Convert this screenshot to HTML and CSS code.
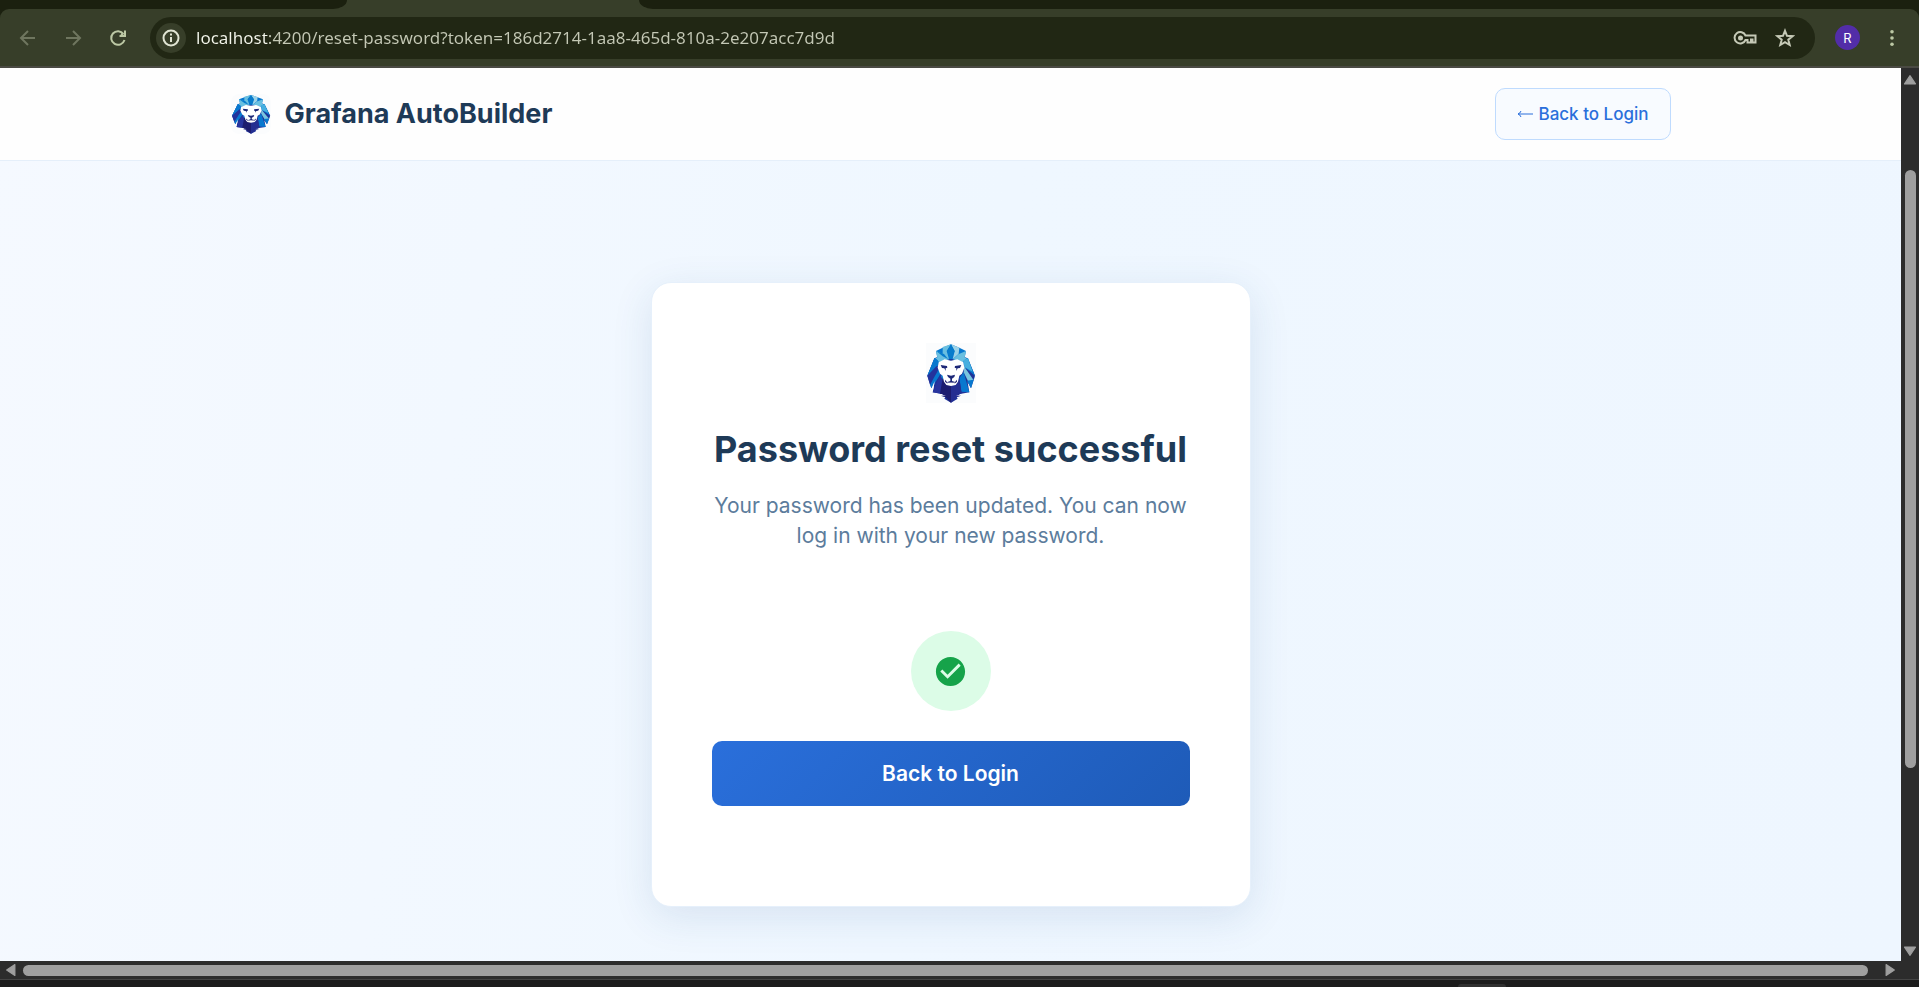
FILE: index.html
```html
<!DOCTYPE html>
<html lang="en">
<head>
<meta charset="utf-8">
<meta name="viewport" content="width=device-width, initial-scale=1">
<title>Grafana AutoBuilder</title>
<link rel="stylesheet" href="styles.css">
</head>
<body>
<svg class="sprite" aria-hidden="true">
  <symbol id="lion" viewBox="30 24 150 180" preserveAspectRatio="none">
    <path fill="#fbfcfd" d="M30 24h150v180H30z"/>
    <path fill="#1f3399" d="M55 70 34 122 46 160 56 142 50 172 82 178 75 182 88 186 85 191 105 203 125 191 122 186 135 182 128 178 160 172 155 142 165 160 177 122 155 70 105 50z"/>
    <path fill="#0878cf" d="M105 28 127 37 150 48 146 68 156 70 177 122 145 96 139 78 105 72 71 78 66 92 34 122 55 70 64 68 60 48 83 37z"/>
    <path fill="#69bfe0" d="M60 48 83 58 99 73 70 82 58 70 64 67zM80 36 105 28 92 48 99 72 80 56zM150 48 127 58 111 73 140 82 152 70 146 67z"/>
    <path fill="#9cd3e8" d="M105 28 130 38 128 56 110 73 116 49z"/>
    <path fill="#087ccc" d="M105 28 116 48 105 74 93 48zM62 49 84 57 96 72 80 64z"/>
    <path fill="#46afdf" d="M142 75 156 70 170 110 145 96z"/>
    <path fill="#79c5df" d="M144 94 172 134 163 152 143 112z"/>
    <path fill="#0878cf" d="M34 122 56 70 66 76 61 94zM67 96 76 114 46 160 42 148zM143 112 160 172 136 170 130 130zM172 134 177 122 165 160 153 137z"/>
    <path fill="#23339c" d="M34 122 62 93 69 101 42 149z"/>
    <path fill="#1685d1" d="M78 116 87 130 56 164z"/>
    <path fill="#28349e" d="M72 119 56 158 50 172 76 176 82 137z"/>
    <path fill="#1d1c6f" d="M80 130 72 176 82 178 76 183 88 186 105 203V148z"/>
    <path fill="#252e91" d="M130 130 137 175 128 178 135 182 123 186 105 203V148z"/>
    <path fill="#fff" d="M68 82 86 73 105 77 124 73 142 82 145 98 138 116 130 122 126 140 119 150 105 153 91 150 84 140 80 122 72 116 65 98z"/>
    <path fill="#fff" d="m46 162 10-24-6 34zM73 180l17 2-12 2zM137 180l-17 2 12 2z"/>
    <path fill="#1c2777" d="m74 90 19 3 1 5-5 2v8l-4-8-7-1zM136 90l-19 3-1 5 5 2v8l4-8 7-1zM93 119l12 3 12-3-2 7-7 5v7l12 4-14 1-14-1 11-4v-7l-7-5z"/>
    <path fill="#1d1c6f" d="M88 134 94 143 105 140 116 143 122 134 123 140 115 146H95L87 140z"/>
    <path fill="#fff" d="M93 144q12-3 24 0l-3 5H96z"/>
  </symbol>
</svg>

<header class="browser">
  <div class="tabstrip"><span class="tabs-before"></span><span class="tab-active"></span><span class="tabs-after"></span></div>
  <div class="toolbar">
    <nav class="nav-buttons" aria-label="Browser navigation">
      <button class="tool dim" aria-label="Back"><svg viewBox="0 0 20 20"><path d="M17 10H4M10 3l-7 7 7 7"/></svg></button>
      <button class="tool dim" aria-label="Forward"><svg viewBox="0 0 20 20"><path d="M3 10h13M10 3l7 7-7 7"/></svg></button>
      <button class="tool" aria-label="Reload"><svg viewBox="0 0 20 20"><path d="M16.500 12A6.800 6.800 0 1 1 15.500 6M11.500 8h5.500V2.500M13 6l3 2"/></svg></button>
    </nav>
    <div class="omnibox">
      <button class="site-info" aria-label="Site information"><svg viewBox="0 0 20 20"><circle cx="10" cy="10" r="7.500"/><path d="M10 9v5M10 5.500v2"/></svg></button>
      <input class="url" type="text" aria-label="Address" value="localhost:4200/reset-password?token=186d2714-1aa8-465d-810a-2e207acc7d9d">
      <button class="omni-icon key" aria-label="Passwords"><svg viewBox="0 0 24 16"><path d="M12.500 5.500h10v7h-3v-3h-1.500v3h-3.500v-2.500h-2A5.700 5.700 0 1 1 12.500 5.500z"/><circle class="solid" cx="7.500" cy="8" r="2.500"/></svg></button>
      <button class="omni-icon" aria-label="Bookmark"><svg viewBox="0 0 20 20"><path d="m10 2.800 2 5 5.600.4-4.300 3.500 1.400 5.300L10 14.200 5.300 17l1.400-5.300-4.300-3.500L8 7.800z"/></svg></button>
    </div>
    <button class="avatar" aria-label="Profile">R</button>
    <button class="menu" aria-label="Menu"><svg viewBox="0 0 4 20"><circle cx="2" cy="3" r="2"/><circle cx="2" cy="10" r="2"/><circle cx="2" cy="17" r="2"/></svg></button>
  </div>
</header>

<div class="viewport">
  <div class="page">
    <header class="site-header">
      <div class="site-inner">
        <div class="brand"><svg class="brand-logo" role="img" aria-label="Lion logo"><use href="#lion"/></svg><span>Grafana AutoBuilder</span></div>
        <a class="back-link" href="#login"><svg viewBox="0 0 16 10" aria-hidden="true"><path d="M16 5H1M4 2Q3 4.500 1 5q2 .5 3 3"/></svg>Back to Login</a>
      </div>
    </header>
    <main class="content">
      <section class="card">
        <svg class="card-logo" role="img" aria-label="Lion logo"><use href="#lion"/></svg>
        <h1>Password reset successful</h1>
        <p>Your password has been updated. You can now log in with your new password.</p>
        <div class="success"><svg viewBox="0 0 24 24" aria-hidden="true"><path d="M12 2C6.480 2 2 6.480 2 12s4.480 10 10 10 10-4.480 10-10S17.520 2 12 2zm-2 15-5-5 1.410-1.410L10 14.170l7.590-7.590L19 8l-9 9z"/></svg></div>
        <button class="primary">Back to Login</button>
      </section>
    </main>
  </div>
  <div class="scroll-y">
    <svg viewBox="0 0 12 10"><path d="M6 1.500 11 9H1z"/></svg>
    <div class="track-y"><span class="thumb-y"></span></div>
    <svg viewBox="0 0 12 10"><path d="M6 8.500 11 1H1z"/></svg>
  </div>
</div>
<div class="scroll-x">
  <svg viewBox="0 0 10 12"><path d="M1.500 6 9 1v10z"/></svg>
  <span class="thumb-x"></span>
  <svg viewBox="0 0 10 12"><path d="M8.500 6 1 1v10z"/></svg>
</div>
<footer class="taskbar"><span class="task-hint"></span></footer>
</body>
</html>
```

FILE: styles.css
```css
* { box-sizing: border-box; }

body {
  margin: 0;
  height: 100vh;
  display: flex;
  flex-direction: column;
  overflow: hidden;
  font-family: Inter, "Open Sans", sans-serif;
  background: #1c1c1c;
}

button {
  padding: 0;
  border: 0;
  background: none;
  font-family: inherit;
}

svg { display: block; }

.sprite {
  position: absolute;
  width: 0;
  height: 0;
}

/* Browser frame */
.browser {
  flex: none;
  background: #1b200f;
  border-bottom: 2px solid #4a4a43;
}

.tabstrip {
  display: flex;
  height: 9px;
  background: linear-gradient(#373e29, #373e29) 320px 0 / 340px 9px no-repeat #1b200f;
}

.tabs-before,
.tabs-after { background: #1b200f; }

.tabs-before {
  width: 347px;
  border-bottom-right-radius: 14px 9px;
}

.tab-active { width: 292px; }

.tabs-after {
  flex: 1;
  border-bottom-left-radius: 14px 9px;
}

.toolbar {
  display: flex;
  align-items: center;
  height: 57px;
  padding: 0 16px 0 18px;
  border-radius: 9px 9px 0 0;
  background: #373e29;
}

.nav-buttons {
  display: flex;
  gap: 25px;
  width: 132px;
}

.tool { color: #bcc8a4; }
.dim { color: #6f765f; }

.tool svg,
.omni-icon svg,
.site-info svg {
  width: 20px;
  height: 20px;
  fill: none;
  stroke: currentColor;
  stroke-width: 2;
}

.omnibox {
  flex: 1;
  display: flex;
  align-items: center;
  height: 42px;
  padding: 0 20px 0 6px;
  border-radius: 21px;
  background: #212714;
}

.site-info {
  display: grid;
  place-items: center;
  width: 30px;
  height: 30px;
  border-radius: 50%;
  background: #373e29;
  color: #e0e4d3;
}

.url {
  flex: 1;
  min-width: 0;
  margin-left: 10px;
  padding: 0;
  border: 0;
  outline: 0;
  font: 17px/24px "Noto Sans", "Open Sans", sans-serif;
  color: transparent;
  background: linear-gradient(90deg, #f4f6ec 72px, #c4c8b5 72px);
  -webkit-background-clip: text;
  background-clip: text;
}

.omni-icon {
  margin-left: 18px;
  color: #c5c9b6;
}

.omni-icon.key svg {
  width: 24px;
  height: 16px;
}

.solid {
  fill: currentColor;
  stroke: none;
}

.avatar {
  width: 25px;
  height: 25px;
  margin: 0 30px 0 20px;
  border-radius: 50%;
  background: #522da8;
  color: #fff;
  font-size: 13px;
}

.menu { padding: 0 9px 0 0; }

.menu svg {
  width: 4px;
  height: 18px;
  fill: #bcc8a4;
}

/* Page */
.viewport {
  flex: 1;
  display: flex;
  min-height: 0;
}

.page {
  flex: 1;
  min-width: 0;
  background: linear-gradient(100deg, #f5f9ff 0%, #eff7ff 50%, #eef6ff 100%);
}

.site-header {
  padding: 20px 32px;
  background: #fefefe;
  border-bottom: 1px solid #e5effa;
}

.site-inner {
  display: flex;
  align-items: center;
  justify-content: space-between;
  max-width: 1440px;
  margin: 0 auto;
}

.brand {
  display: flex;
  align-items: center;
  gap: 14px;
  color: #1e3a57;
  font-size: 27px;
  font-weight: 700;
  line-height: 40px;
}

.brand-logo {
  width: 40px;
  height: 40px;
  border-radius: 8px;
}

.back-link {
  display: flex;
  align-items: center;
  gap: 5px;
  height: 52px;
  padding: 0 21px;
  border: 1px solid #bfdbfe;
  border-radius: 10px;
  background: #f8fbff;
  color: #2a6fdb;
  font-size: 17px;
  font-weight: 500;
  text-decoration: none;
}

.back-link svg {
  width: 16px;
  height: 10px;
  fill: none;
  stroke: currentColor;
}

.content {
  display: flex;
  justify-content: center;
  padding: 121px 32px 54px;
}

.card {
  display: flex;
  flex-direction: column;
  align-items: center;
  width: 100%;
  max-width: 600px;
  padding: 60px 60px 100px;
  border: 1px solid #e6f0fb;
  border-radius: 20px;
  background: #fff;
  box-shadow: 0 10px 40px rgba(30, 80, 140, 0.12);
}

.card-logo {
  width: 50px;
  height: 60px;
}

h1 {
  margin: 19px 0 15px;
  color: #1e3a57;
  font-size: 36px;
  font-weight: 700;
  line-height: 54px;
  white-space: nowrap;
}

p {
  margin: 0 0 80px;
  color: #5c7c9c;
  font-size: 21px;
  line-height: 30px;
  text-align: center;
}

.success {
  display: grid;
  place-items: center;
  width: 80px;
  height: 80px;
  margin-bottom: 30px;
  border-radius: 50%;
  background: #dcfce7;
}

.success svg {
  width: 35px;
  height: 35px;
  fill: #16a34a;
}

.primary {
  width: 100%;
  height: 65px;
  border-radius: 10px;
  background: linear-gradient(135deg, #2a6fdb, #1e5bb8);
  color: #fff;
  font-size: 21px;
  font-weight: 600;
}

/* Scrollbars */
.scroll-y {
  display: flex;
  flex-direction: column;
  align-items: center;
  width: 18px;
  padding: 6px 0 4px;
  background: #2c2c2c;
}

.scroll-y svg {
  width: 14px;
  height: 11px;
}

.scroll-y svg,
.scroll-x svg {
  flex: none;
  fill: #9f9f9f;
  stroke: #9f9f9f;
  stroke-width: 1;
  stroke-linejoin: round;
}

.track-y {
  flex: 1;
  padding-top: 85px;
}

.thumb-y {
  display: block;
  width: 11px;
  height: 77%;
  border-radius: 6px;
  background: #9f9f9f;
}

.scroll-x {
  flex: none;
  display: flex;
  align-items: center;
  height: 18px;
  padding: 0 23px 0 5px;
  background: #2c2c2c;
}

.scroll-x svg {
  width: 11px;
  height: 14px;
}

.thumb-x {
  flex: 1;
  height: 11px;
  margin: 0 17px 0 7px;
  border-radius: 6px;
  background: #9f9f9f;
}

.taskbar {
  flex: none;
  display: flex;
  align-items: flex-end;
  height: 8px;
  padding-left: 76%;
  border-top: 1px solid #444;
  background: #1c1c1c;
}

.task-hint {
  width: 48px;
  height: 3px;
  border-radius: 3px 3px 0 0;
  background: #303030;
}
```
